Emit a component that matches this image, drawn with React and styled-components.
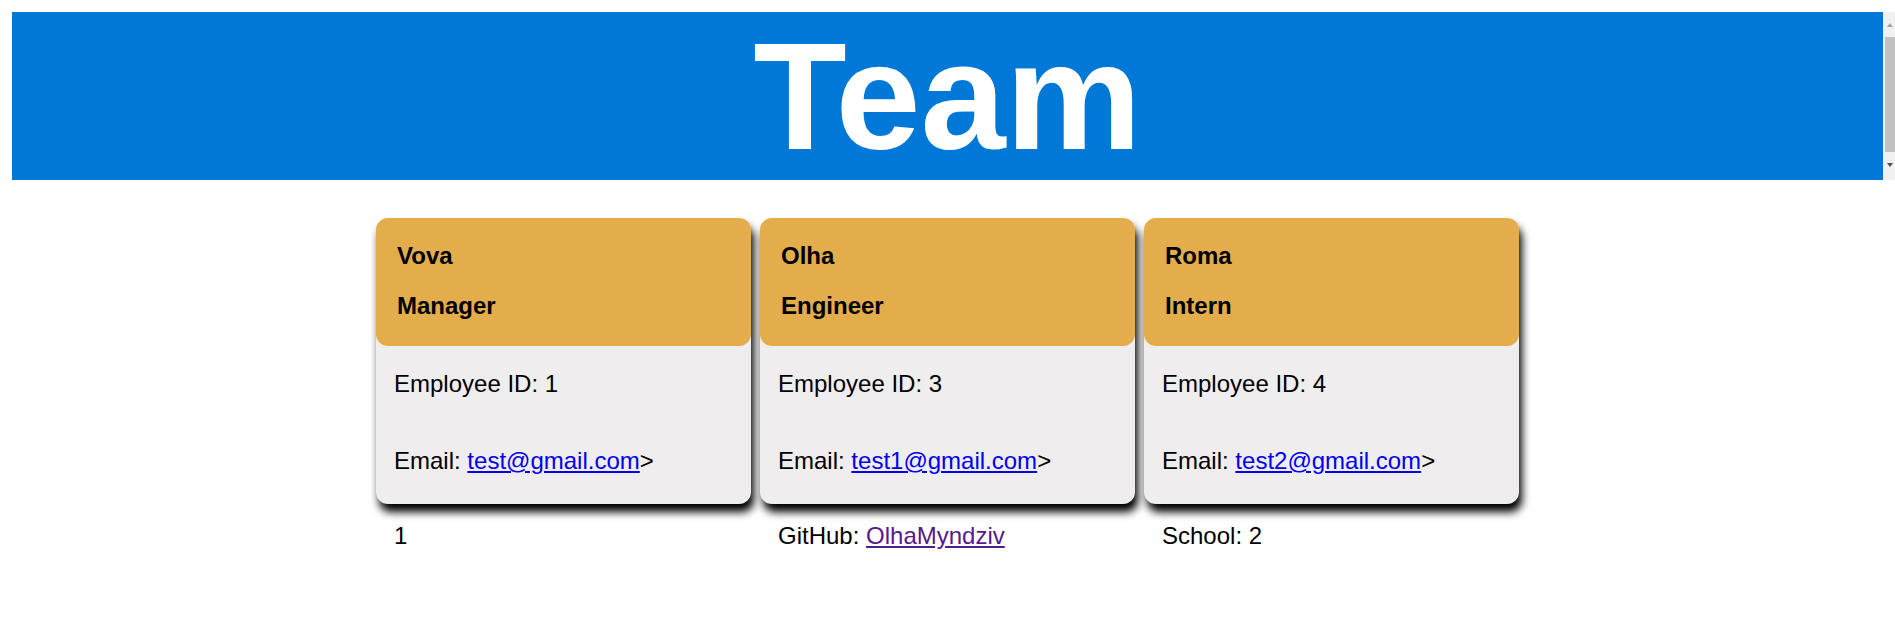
import React from 'react';
import styled, { createGlobalStyle } from 'styled-components';

const GlobalStyle = createGlobalStyle`
  html, body {
    margin: 0;
    padding: 0;
    background: #ffffff;
    overflow: hidden;
  }
  body {
    font-family: "Liberation Sans", Arial, sans-serif;
    color: #000;
  }
`;

const Page = styled.div`
  padding: 12px 0 0 12px;
`;

const HeaderRow = styled.div`
  display: flex;
  height: 168px;
`;

const Banner = styled.header`
  flex: 1;
  background-color: #0078d7;
  padding-top: 7px;
  box-sizing: border-box;
`;

const Title = styled.h1`
  margin: 0;
  color: #ffffff;
  font-size: 153px;
  line-height: 1;
  font-weight: 700;
  text-align: center;
`;

const ScrollTrack = styled.div`
  width: 12px;
  background: #f1f1f1;
  display: flex;
  flex-direction: column;
  padding: 11px 0 0 0;
  box-sizing: border-box;
`;

const Arrow = styled.div`
  width: 0;
  height: 0;
  margin-left: 4px;
  border-left: 3.5px solid transparent;
  border-right: 3.5px solid transparent;
  ${p => p.$down
    ? `border-top: 4px solid #505050; margin-top: 11px;`
    : `border-bottom: 4px solid #a3a3a3;`}
`;

const Thumb = styled.div`
  margin: 10px 0 0 2px;
  height: 115px;
  background: #c1c1c1;
`;

const Cards = styled.main`
  display: flex;
  justify-content: center;
  gap: 9px;
  margin: 38px 12px 0 0;
`;

const Column = styled.section`
  width: 375px;
  display: flex;
  flex-direction: column;
`;

const Card = styled.div`
  background: #efedee;
  border-radius: 12px;
  box-shadow: 3px 8px 8px #000;
`;

const CardHead = styled.div`
  background: #e3ad4b;
  border-radius: 12px;
  padding: 24px 20px 26px 21px;
  display: flex;
  flex-direction: column;
  gap: 22px;
`;

const HeadLine = styled.h4`
  margin: 0;
  font-size: 24px;
  font-weight: 700;
`;

const CardBody = styled.ul`
  list-style: none;
  margin: 0;
  padding: 24px 17px 29px 18px;
  display: flex;
  flex-direction: column;
  gap: 49px;
`;

const Item = styled.li`
  font-size: 24px;
`;

const Extra = styled.div`
  padding: 18px 17px 0 18px;
  font-size: 24px;
`;

const Link = styled.a`
  color: ${p => (p.$visited ? '#551a8b' : '#0000ee')};
  text-decoration: underline;
`;

const team = [
  { name: 'Vova', role: 'Manager', id: 1, email: 'test@gmail.com', extra: <>1</> },
  {
    name: 'Olha',
    role: 'Engineer',
    id: 3,
    email: 'test1@gmail.com',
    extra: <>GitHub: <Link $visited href="#">OlhaMyndziv</Link></>,
  },
  { name: 'Roma', role: 'Intern', id: 4, email: 'test2@gmail.com', extra: <>School: 2</> },
];

const App = () => {
  return (
    <>
      <GlobalStyle />
      <Page>
        <HeaderRow>
          <Banner>
            <Title>Team</Title>
          </Banner>
          <ScrollTrack>
            <Arrow />
            <Thumb />
            <Arrow $down />
          </ScrollTrack>
        </HeaderRow>
        <Cards>
          {team.map(m => (
            <Column key={m.id}>
              <Card>
                <CardHead>
                  <HeadLine>{m.name}</HeadLine>
                  <HeadLine>{m.role}</HeadLine>
                </CardHead>
                <CardBody>
                  <Item>Employee ID: {m.id}</Item>
                  <Item>Email: <Link href="#">{m.email}</Link>&gt;</Item>
                </CardBody>
              </Card>
              <Extra>{m.extra}</Extra>
            </Column>
          ))}
        </Cards>
      </Page>
    </>
  );
};

export default App;
